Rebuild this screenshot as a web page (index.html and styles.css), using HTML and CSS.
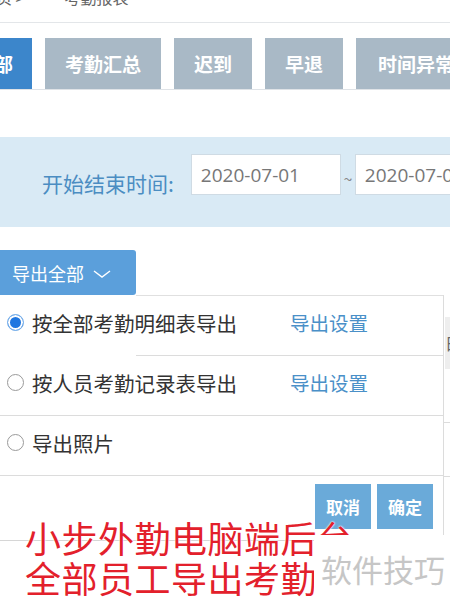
FILE: index.html
```html
<!DOCTYPE html>
<html lang="zh">
<head>
<meta charset="utf-8">
<link rel="stylesheet" href="styles.css">
</head>
<body>
<div class="page">
  <div class="crumb"><span class="crumb-a">首页 &gt;</span><span class="crumb-b">考勤报表</span></div>
  <div class="tabs">
    <div class="tab active">全部</div>
    <div class="tab w116">考勤汇总</div>
    <div class="tab w78">迟到</div>
    <div class="tab w78">早退</div>
    <div class="tab w110">时间异常</div>
  </div>
  <div class="filter">
    <span class="flabel">开始结束时间:</span>
    <div class="finput">2020-07-01</div>
    <span class="tilde">~</span>
    <div class="finput wide">2020-07-01</div>
  </div>
  <div class="export-btn">导出全部
    <svg class="chev" width="20" height="12" viewBox="0 0 20 12"><path d="M2 3 L10 9 L18 3" fill="none" stroke="#fff" stroke-width="1.4"/></svg>
  </div>
  <div class="area">
    <div class="menu">
      <div class="row"><span class="radio on"></span><span class="opt">按全部考勤明细表导出</span><span class="link">导出设置</span></div>
      <div class="row"><span class="radio"></span><span class="opt">按人员考勤记录表导出</span><span class="link">导出设置</span></div>
      <div class="row"><span class="radio"></span><span class="opt">导出照片</span></div>
      <div class="foot"><span class="btn">取消</span><span class="btn">确定</span></div>
    </div>
    <div class="table-strip">
      <div class="th">日</div>
      <div class="tr"></div>
      <div class="tr"></div>
    </div>
  </div>
  <div class="caption">小步外勤电脑端后台<br>全部员工导出考勤表</div>
  <div class="mark">软件技巧</div>
</div>
</body>
</html>
```
FILE: styles.css
```css
* { box-sizing: border-box; }
html, body { margin: 0; padding: 0; background: #fff; }
body { font-family: "Noto Sans CJK SC", "Open Sans", sans-serif; }
.page { position: relative; width: 450px; height: 601px; overflow: hidden; }

.crumb { height: 23px; border-bottom: 1px solid #e3e6e9; display: flex; gap: 40px; align-items: flex-end; font-size: 16px; color: #666; line-height: 1; overflow: hidden; }
.crumb span { margin-bottom: 17px; }
.crumb-a { margin-left: -20px; }

.tabs { display: flex; gap: 13px; margin-top: 15px; margin-left: -44px; height: 52px; border-bottom: 1px solid #dfe3e7; width: 520px; overflow: hidden; }
.tab { flex: none; height: 51px; background: #a9b9c6; color: #fff; font-weight: 700; font-size: 19px; display: flex; align-items: center; justify-content: center; padding: 0 18px; white-space: nowrap; }
.tab.active { background: #3c86cb; width: 76px; }
.w116 { width: 116px; }
.w78 { width: 78px; }
.w110 { width: 120px; }

.filter { margin-top: 47px; height: 90px; background: #d9eaf5; display: flex; align-items: center; padding-left: 42px; white-space: nowrap; overflow: hidden; }
.flabel { font-size: 21px; color: #4b8dc2; margin-top: 2px; margin-right: 17px; flex: none; }
.finput { flex: none; width: 150px; height: 41px; background: #fff; border: 1px solid #cfdbe4; color: #777; font-family: "Open Sans", "Noto Sans CJK SC", sans-serif; font-size: 19px; display: flex; align-items: center; padding-left: 9px; margin-bottom: 15px; }
.finput.wide { width: 120px; }
.tilde { flex: none; color: #888; font-size: 16px; width: 14px; text-align: center; margin-top: -8px; }

.export-btn { margin-top: 23px; width: 136px; height: 45px; background: #5b9fdb; color: #fff; font-size: 18px; display: flex; align-items: center; padding-left: 12px; gap: 8px; border-radius: 0 3px 3px 0; }
.chev { margin-top: 2px; }

.area { display: flex; height: 246px; }
.menu { width: 444px; border-right: 1px solid #dcdcdc; border-bottom: 1px solid #d6d6d6; }
.row { height: 60px; border-bottom: 1px solid #dcdcdc; display: flex; align-items: center; padding-left: 7px; padding-bottom: 6px; font-size: 20.5px; color: #333; }
.row:first-child { height: 61px; border-top: 1px solid #e0e0e0; margin-left: 136px; padding-left: 0; }
.row:first-child .radio { margin-left: -129px; }
.radio { flex: none; width: 17px; height: 17px; border-radius: 50%; border: 1px solid #9a9a9a; margin-right: 8px; }
.radio.on { border: 1px solid #7db3ea; background: #1f76e0; box-shadow: inset 0 0 0 2px #fff; }
.opt { width: 258px; }
.link { color: #4a90c8; font-size: 19.5px; }
.foot { display: flex; justify-content: flex-end; gap: 6px; padding: 8px 10px 0 0; }
.btn { width: 56px; height: 45px; background: #6aaad9; color: #fff; font-weight: 700; font-size: 17px; display: flex; align-items: center; justify-content: center; }

.table-strip { flex: 1; padding-top: 22px; overflow: hidden; }
.th { height: 52px; background: #eeeeee; font-size: 16px; color: #666; line-height: 52px; margin-left: 1px; white-space: nowrap; }
.tr { height: 54px; border-bottom: 1px solid #dcdcdc; }

.caption { position: absolute; left: 25px; top: 517px; font-size: 36px; line-height: 40px; color: #e3202b; letter-spacing: 0.5px; white-space: nowrap; text-shadow: 0 0 2px #fff, 0 0 2px #fff; }
.mark { position: absolute; left: 314px; top: 535px; width: 136px; height: 66px; background: #fff; color: #c6c6c6; font-size: 31px; display: flex; align-items: center; padding-left: 7px; white-space: nowrap; }
```
